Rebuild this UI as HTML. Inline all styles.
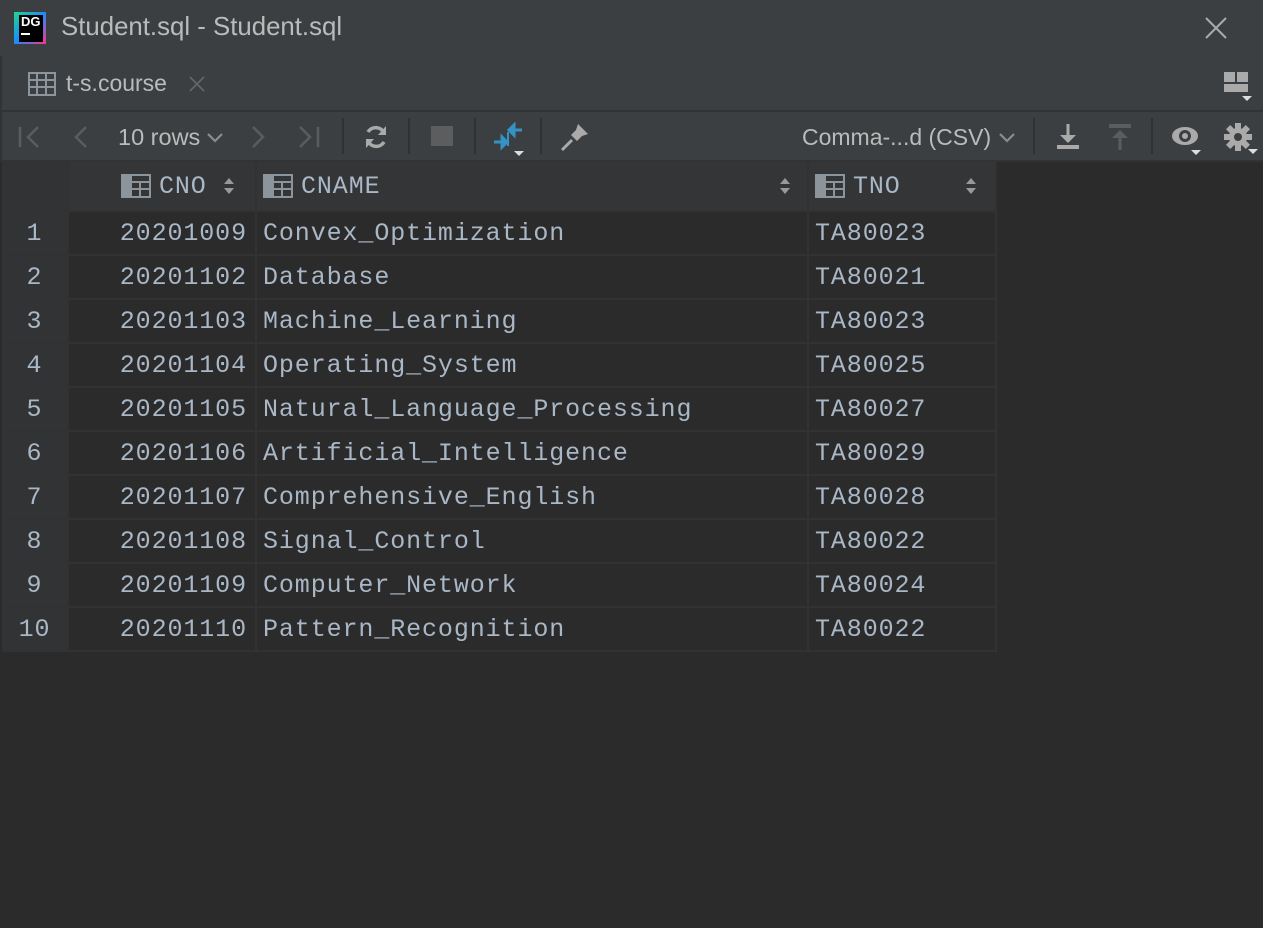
<!DOCTYPE html>
<html><head><meta charset="utf-8"><style>
*{margin:0;padding:0;box-sizing:border-box}
body{width:1263px;height:928px;background:#2b2b2b;overflow:hidden;position:relative;font-family:"Liberation Sans",sans-serif;color:#bbbbbb}
.abs{position:absolute}
#title{left:0;top:0;width:1263px;height:56px;background:#3c3f41}
#tabs{left:0;top:56px;width:1263px;height:54px;background:#3c3f41;border-left:2px solid #313335}
#tb{left:0;top:112px;width:1263px;height:48px;background:#3c3f41;border-left:2px solid #313335}
.sep1{left:0;top:110px;width:1263px;height:2px;background:#313335}
.sep2{left:0;top:160px;width:1263px;height:2px;background:#313335}
.mono{font-family:"Liberation Mono",monospace;font-size:25px;letter-spacing:0.9px;color:#a9b7c6}
table{position:absolute;left:2px;top:162px;border-collapse:collapse}
td{height:44px;border:2px solid #323232;padding:0;white-space:nowrap}
tr.h td{height:49px;background:#333537;border-top:none}
td.n{width:66px;background:#313335;text-align:center;border-left:none}
td.c{width:188px;text-align:right;padding-right:8px;background:#2b2b2b}
td.m{width:552px;padding-left:6px;background:#2b2b2b}
td.t{width:188px;padding-left:6px;background:#2b2b2b}
.vs{position:absolute;top:118px;width:2px;height:36px;background:#2f3133}
.ic{display:inline-block;vertical-align:middle}
</style></head><body>
<div id="title" class="abs"></div>
<div class="abs" style="left:14px;top:12px;width:32px;height:32px;background:linear-gradient(135deg,#21d789,#1a8cff 50%,#ff318c);"></div>
<div class="abs" style="left:19px;top:15px;width:24px;height:27px;background:#000;color:#fff;font-weight:bold;font-size:13px;padding-left:2px;line-height:14px">DG<div style="width:9px;height:2px;background:#fff;margin-top:4px"></div></div>
<div class="abs" style="left:61px;top:13px;font-size:25.8px;color:#bbbbbb">Student.sql - Student.sql</div>
<svg class="abs" style="left:1204px;top:16px" width="24" height="24"><path d="M2 2L22 22M22 2L2 22" stroke="#aaa" stroke-width="2"/></svg>
<div id="tabs" class="abs"></div>
<svg class="abs" style="left:28px;top:72px" width="28" height="24"><rect x="1" y="1" width="26" height="22" fill="none" stroke="#8c959c" stroke-width="2"/><path d="M1 8H27M1 15H27M9 1V23M18 1V23" stroke="#8c959c" stroke-width="2"/></svg>
<div class="abs" style="left:66px;top:70px;font-size:23px;color:#bbbbbb">t-s.course</div>
<svg class="abs" style="left:189px;top:76px" width="16" height="16"><path d="M1 1L15 15M15 1L1 15" stroke="#666" stroke-width="1.6"/></svg>
<svg class="abs" style="left:1223px;top:71px" width="32" height="30"><rect x="1" y="1" width="11" height="10" fill="#aaa"/><rect x="14" y="1" width="11" height="10" fill="#aaa"/><rect x="1" y="13" width="24" height="8" fill="#aaa"/><path d="M19 25h10l-5 5z" fill="#ddd"/></svg>
<div class="sep1 abs"></div>
<div id="tb" class="abs"></div>
<svg class="abs" style="left:18px;top:126px" width="24" height="22"><path d="M2 1V21M20 1L10 11L20 21" stroke="#5a5d5f" stroke-width="2.5" fill="none"/></svg>
<svg class="abs" style="left:72px;top:126px" width="20" height="22"><path d="M14 1L4 11L14 21" stroke="#5a5d5f" stroke-width="2.5" fill="none"/></svg>
<div class="abs" style="left:118px;top:124px;font-size:23.5px;color:#bbbbbb">10 rows</div>
<svg class="abs" style="left:206px;top:132px" width="18" height="12"><path d="M2 2L9 9L16 2" stroke="#8a8d8f" stroke-width="2.2" fill="none"/></svg>
<svg class="abs" style="left:248px;top:126px" width="20" height="22"><path d="M5 1L15 11L5 21" stroke="#5a5d5f" stroke-width="2.5" fill="none"/></svg>
<svg class="abs" style="left:298px;top:126px" width="24" height="22"><path d="M2 1L12 11L2 21M20 1V21" stroke="#5a5d5f" stroke-width="2.5" fill="none"/></svg>
<div class="vs" style="left:342px"></div>
<svg class="abs" style="left:362px;top:123px" width="28" height="28"><path d="M22 10A9 9 0 0 0 6 9M6 18A9 9 0 0 0 22 19" stroke="#aaa" stroke-width="3.5" fill="none"/><path d="M24 3V12H16z" fill="#aaa"/><path d="M4 25V16H12z" fill="#aaa"/></svg>
<div class="vs" style="left:408px"></div>
<div class="abs" style="left:431px;top:126px;width:22px;height:20px;background:#5b5d5f"></div>
<div class="vs" style="left:474px"></div>
<svg class="abs" style="left:492px;top:122px" width="36" height="34"><path d="M2 20H14M10 15L15 20L10 25V15z" stroke="#3592c4" stroke-width="3" fill="#3592c4"/><path d="M30 8H18M22 3L17 8L22 13z" stroke="#3592c4" stroke-width="3" fill="#3592c4"/><path d="M16 10L16 24" stroke="#3592c4" stroke-width="2"/><path d="M22 29h10l-5 5z" fill="#ddd"/></svg>
<div class="vs" style="left:540px"></div>
<svg class="abs" style="left:560px;top:122px" width="30" height="30"><path d="M18 2L28 12L22 14L17 19L11 13L16 8z" fill="#aaa"/><path d="M12 18L2 28" stroke="#aaa" stroke-width="3"/></svg>
<div class="abs" style="left:802px;top:124px;font-size:23px;color:#bbbbbb">Comma-...d (CSV)</div>
<svg class="abs" style="left:998px;top:132px" width="18" height="12"><path d="M2 2L9 9L16 2" stroke="#8a8d8f" stroke-width="2.2" fill="none"/></svg>
<div class="vs" style="left:1033px"></div>
<svg class="abs" style="left:1054px;top:122px" width="28" height="28"><path d="M14 2V20" stroke="#aaa" stroke-width="3"/><path d="M6 13L14 21L22 13z" fill="#aaa"/><rect x="3" y="23" width="22" height="4" fill="#aaa"/></svg>
<svg class="abs" style="left:1106px;top:122px" width="28" height="28"><rect x="3" y="2" width="22" height="4" fill="#5b5d5f"/><path d="M14 10V28" stroke="#5b5d5f" stroke-width="3"/><path d="M6 16L14 8L22 16z" fill="#5b5d5f"/></svg>
<div class="vs" style="left:1151px"></div>
<svg class="abs" style="left:1170px;top:122px" width="36" height="34"><ellipse cx="15" cy="14" rx="13" ry="9" fill="#aaa"/><circle cx="15" cy="14" r="6" fill="#3c3f41"/><circle cx="15" cy="14" r="3" fill="#aaa"/><path d="M21 28h10l-5 5z" fill="#ddd"/></svg>
<svg class="abs" style="left:1222px;top:121px" width="40" height="36"><g transform="translate(16 16)" fill="#aaa"><circle r="9"/><rect x="-3" y="-14" width="6" height="28"/><rect x="-3" y="-14" width="6" height="28" transform="rotate(45)"/><rect x="-3" y="-14" width="6" height="28" transform="rotate(90)"/><rect x="-3" y="-14" width="6" height="28" transform="rotate(135)"/></g><circle cx="16" cy="16" r="4" fill="#3c3f41"/><path d="M26 28h10l-5 5z" fill="#ddd"/></svg>
<div class="sep2 abs"></div>
<table class="mono">
<tr class="h"><td class="n" style="background:#313335"></td>
<td class="c" style="background:#333537;text-align:left;padding-left:52px"><svg class="ic" width="30" height="24" style="margin-right:8px"><rect x="0" y="0" width="9" height="24" fill="#8c959c"/><rect x="10" y="1" width="19" height="22" fill="none" stroke="#8c959c" stroke-width="2"/><path d="M10 8H29M10 15H29M19 8V23" stroke="#8c959c" stroke-width="2"/></svg><span style="color:#a9b7c6">CNO</span><svg class="ic" width="12" height="20" style="margin-left:16px"><path d="M1 8L6 2L11 8zM1 12L6 18L11 12z" fill="#999"/></svg></td>
<td class="m" style="background:#333537"><svg class="ic" width="30" height="24" style="margin-right:8px"><rect x="0" y="0" width="9" height="24" fill="#8c959c"/><rect x="10" y="1" width="19" height="22" fill="none" stroke="#8c959c" stroke-width="2"/><path d="M10 8H29M10 15H29M19 8V23" stroke="#8c959c" stroke-width="2"/></svg>CNAME<svg class="ic" width="12" height="20" style="margin-left:398px"><path d="M1 8L6 2L11 8zM1 12L6 18L11 12z" fill="#999"/></svg></td>
<td class="t" style="background:#333537"><svg class="ic" width="30" height="24" style="margin-right:8px"><rect x="0" y="0" width="9" height="24" fill="#8c959c"/><rect x="10" y="1" width="19" height="22" fill="none" stroke="#8c959c" stroke-width="2"/><path d="M10 8H29M10 15H29M19 8V23" stroke="#8c959c" stroke-width="2"/></svg>TNO<svg class="ic" width="12" height="20" style="margin-left:64px"><path d="M1 8L6 2L11 8zM1 12L6 18L11 12z" fill="#999"/></svg></td></tr>
<tr><td class="n">1</td><td class="c">20201009</td><td class="m">Convex_Optimization</td><td class="t">TA80023</td></tr>
<tr><td class="n">2</td><td class="c">20201102</td><td class="m">Database</td><td class="t">TA80021</td></tr>
<tr><td class="n">3</td><td class="c">20201103</td><td class="m">Machine_Learning</td><td class="t">TA80023</td></tr>
<tr><td class="n">4</td><td class="c">20201104</td><td class="m">Operating_System</td><td class="t">TA80025</td></tr>
<tr><td class="n">5</td><td class="c">20201105</td><td class="m">Natural_Language_Processing</td><td class="t">TA80027</td></tr>
<tr><td class="n">6</td><td class="c">20201106</td><td class="m">Artificial_Intelligence</td><td class="t">TA80029</td></tr>
<tr><td class="n">7</td><td class="c">20201107</td><td class="m">Comprehensive_English</td><td class="t">TA80028</td></tr>
<tr><td class="n">8</td><td class="c">20201108</td><td class="m">Signal_Control</td><td class="t">TA80022</td></tr>
<tr><td class="n">9</td><td class="c">20201109</td><td class="m">Computer_Network</td><td class="t">TA80024</td></tr>
<tr><td class="n">10</td><td class="c">20201110</td><td class="m">Pattern_Recognition</td><td class="t">TA80022</td></tr>
</table>
</body></html>
